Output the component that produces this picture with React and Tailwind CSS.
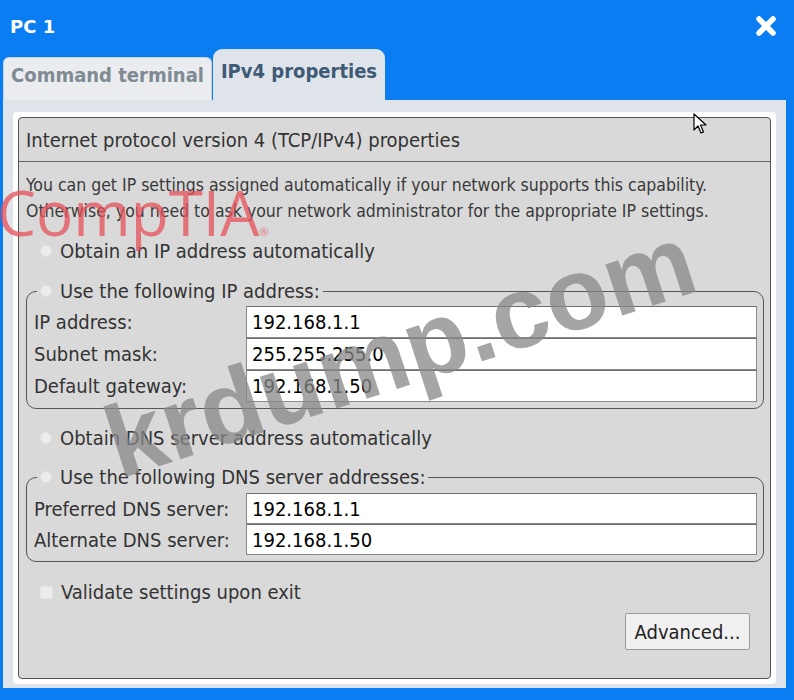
import React from 'react';

const body = "font-['DejaVu_Sans_Condensed','DejaVu_Sans',sans-serif]";

const Radio = () => (
    <span className="inline-block w-[12px] h-[12px] rounded-full bg-[#ececec] border border-[#e2e2e2] shrink-0" />
);

const Row = ({ label, value, tall }) => (
    <div className="flex items-center">
        <div className="w-[219px] pl-[7px] text-[20px] text-[#333]">{label}</div>
        <div className={`w-[511px] ${tall ? 'h-[32px]' : 'h-[31px]'} bg-white border border-[#8a8a8a] border-t-[#6e6e6e] flex items-center pl-[5px] text-[20px] text-black`}>{value}</div>
    </div>
);

const Group = ({ legend, rows, tall }) => (
    <fieldset className="ml-[7px] mr-[6px] border border-[#555] rounded-[10px] pb-[6px]">
        <legend className="ml-[10px] px-[3px] flex items-center gap-[8px] h-[26px] text-[20px] text-[#333]">
            <Radio />
            <span>{legend}</span>
        </legend>
        <div className={`flex flex-col ${tall ? 'mt-[2px]' : 'mt-[3px]'}`}>
            {rows.map((r) => <Row key={r[0]} label={r[0]} value={r[1]} tall={tall} />)}
        </div>
    </fieldset>
);

const App = () => {
    return (
        <div className={`relative w-[794px] h-[700px] bg-[#0a7df3] overflow-hidden flex flex-col ${body}`}>
            {/* title bar */}
            <div className="h-[49px] flex items-center justify-between pl-[10px] pr-[17px] pt-[3px]">
                <span className="text-white font-bold text-[18px] font-['DejaVu_Sans','Liberation_Sans',sans-serif]">PC 1</span>
                <svg width="22" height="22" viewBox="0 0 22 22">
                    <path d="M4 4 L18 18 M18 4 L4 18" stroke="white" strokeWidth="5.5" strokeLinecap="round" />
                </svg>
            </div>

            {/* tabs */}
            <div className="flex items-end pl-[3px] gap-[1px] h-[51px]">
                <div className="w-[209px] h-[43px] bg-[#eaecf0] border border-[#c9d3de] border-b-0 rounded-t-[6px] flex items-center justify-center pb-[9px] text-[20px] font-bold text-[#7f8a93]">
                    Command terminal
                </div>
                <div className="w-[172px] h-[51px] bg-[#dfe3ea] rounded-t-[9px] flex items-center justify-center pb-[8px] text-[20px] font-bold text-[#3e5a76]">
                    IPv4 properties
                </div>
            </div>

            {/* panel */}
            <div className="ml-[3px] mr-[8px] h-[588px] bg-[#dfe3ea] p-[10px] pt-[12px] pb-[4px]">
                <div className="h-full bg-white rounded-[4px] p-[5px]">
                    <div className="h-[562px] bg-[#d9d9d9] border border-[#555] rounded-[4px] flex flex-col">
                        <div className="h-[44px] border-b border-[#666] flex items-center pl-[7px] text-[20px] text-[#333]">
                            Internet protocol version 4 (TCP/IPv4) properties
                        </div>
                        <div className="pt-[10px] pl-[7px] text-[17.5px] leading-[26px] text-[#3a3a3a]">
                            <p>You can get IP settings assigned automatically if your network supports this capability.</p>
                            <p>Otherwise, you need to ask your network administrator for the appropriate IP settings.</p>
                        </div>
                        <div className="mt-[14px] ml-[21px] flex items-center gap-[8px] h-[26px] text-[20px] text-[#333]">
                            <Radio />
                            <span>Obtain an IP address automatically</span>
                        </div>
                        <div className="mt-[14px]">
                            <Group
                                tall
                                legend="Use the following IP address:"
                                rows={[['IP address:', '192.168.1.1'], ['Subnet mask:', '255.255.255.0'], ['Default gateway:', '192.168.1.50']]}
                            />
                        </div>
                        <div className="mt-[16px] ml-[21px] flex items-center gap-[8px] h-[26px] text-[20px] text-[#333]">
                            <Radio />
                            <span>Obtain DNS server address automatically</span>
                        </div>
                        <div className="mt-[13px]">
                            <Group
                                legend="Use the following DNS server addresses:"
                                rows={[['Preferred DNS server:', '192.168.1.1'], ['Alternate DNS server:', '192.168.1.50']]}
                            />
                        </div>
                        <div className="mt-[17px] ml-[21px] flex items-center gap-[8px] h-[26px] text-[20px] text-[#333]">
                            <span className="inline-block w-[13px] h-[13px] bg-[#ececec] border border-[#e2e2e2]" />
                            <span>Validate settings upon exit</span>
                        </div>
                        <div className="mt-[8px] flex justify-end pr-[20px]">
                            <button className="w-[125px] h-[37px] bg-[#f0f0f0] border border-[#9a9a9a] rounded-[2px] text-[20px] text-[#222]">
                                Advanced...
                            </button>
                        </div>
                    </div>
                </div>
            </div>

            {/* mouse cursor */}
            <svg className="absolute left-[693px] top-[113px]" width="14" height="22" viewBox="0 0 14 22">
                <path d="M1 1 L1 17 L5 13 L8 20 L10.5 19 L7.5 12 L13 12 Z" fill="white" stroke="black" strokeWidth="1.2" strokeLinejoin="round" />
            </svg>

            {/* watermarks */}
            <div className="absolute left-[-3px] top-[181px] text-[62px] leading-none font-normal text-[#e8505a] opacity-75 font-['Open_Sans',sans-serif] tracking-[0px]">
                CompTIA<span className="text-[11px]">®</span>
            </div>
            <div className="absolute left-[94px] top-[302px] w-[600px] text-center -rotate-[18deg] text-[102px] leading-none font-bold text-[#888] opacity-75 font-['Liberation_Sans',sans-serif]">
                krdump.com
            </div>
        </div>
    );
};

export default App;
